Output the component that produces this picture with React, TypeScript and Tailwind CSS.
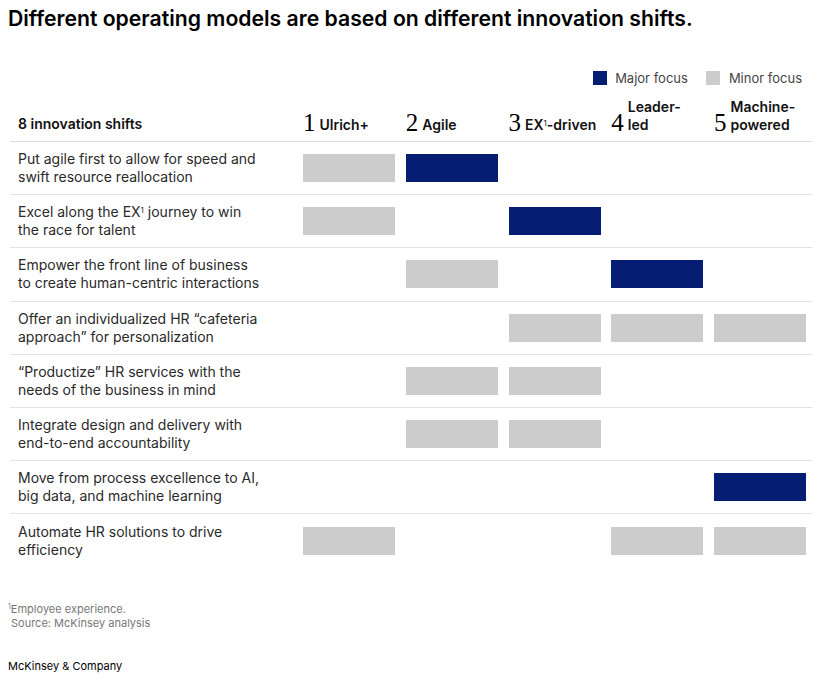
const SANS = "font-['Inter','Liberation_Sans',Arial,sans-serif]";

type Focus = "major" | "minor" | null;

const columns = [
  { n: "1", label: ["Ulrich+"] },
  { n: "2", label: ["Agile"] },
  { n: "3", label: ["EX", "-driven"] },
  { n: "4", label: ["Leader-", "led"] },
  { n: "5", label: ["Machine-", "powered"] },
];

const rows: { text: React.ReactNode; cells: Focus[] }[] = [
  {
    text: <>Put agile first to allow for speed and<br />swift resource reallocation</>,
    cells: ["minor", "major", null, null, null],
  },
  {
    text: <>Excel along the EX<sup className="text-[8px]">1</sup> journey to win<br />the race for talent</>,
    cells: ["minor", null, "major", null, null],
  },
  {
    text: <>Empower the front line of business<br />to create human-centric interactions</>,
    cells: [null, "minor", null, "major", null],
  },
  {
    text: <>Offer an individualized HR “cafeteria<br />approach” for personalization</>,
    cells: [null, null, "minor", "minor", "minor"],
  },
  {
    text: <>“Productize” HR services with the<br />needs of the business in mind</>,
    cells: [null, "minor", "minor", null, null],
  },
  {
    text: <>Integrate design and delivery with<br />end-to-end accountability</>,
    cells: [null, "minor", "minor", null, null],
  },
  {
    text: <>Move from process excellence to AI,<br />big data, and machine learning</>,
    cells: [null, null, null, null, "major"],
  },
  {
    text: <>Automate HR solutions to drive<br />efficiency</>,
    cells: ["minor", null, null, "minor", "minor"],
  },
];

function ColumnHeader({ n, label }: { n: string; label: string[] }) {
  const twoLine = label.length === 2 && label[0].endsWith("-");
  const cls = "text-[14px] leading-[18px] font-semibold text-[#111] pb-[1px]";
  return (
    <div className="w-[92px] flex items-end gap-[4px] whitespace-nowrap">
      <span className="font-['Liberation_Serif',serif] text-[25px] leading-[24px] text-black">{n}</span>
      {twoLine ? (
        <span className={cls}>
          {label[0]}
          <br />
          {label[1]}
        </span>
      ) : label.length === 2 ? (
        <span className={cls}>
          {label[0]}
          <sup className="text-[8px] font-normal">1</sup>
          {label[1]}
        </span>
      ) : (
        <span className={cls}>{label[0]}</span>
      )}
    </div>
  );
}

export default function App() {
  return (
    <div className={`${SANS} w-[836px] h-[676px] bg-white text-[#222] pt-[4px]`}>
      <h1 className="px-[8px] text-[21.2px] leading-[28px] font-semibold text-black">
        Different operating models are based on different innovation shifts.
      </h1>

      <div className="mt-[37px] flex justify-end items-center gap-[18px] pr-[34px] text-[13px] leading-[18px] text-[#444]">
        <div className="flex items-center gap-[8px]">
          <span className="w-[14px] h-[14px] bg-[#051d72]" />
          Major focus
        </div>
        <div className="flex items-center gap-[9px]">
          <span className="w-[14px] h-[14px] bg-[#cccccc]" />
          Minor focus
        </div>
      </div>

      <div className="ml-[10px] w-[802px] mt-[14px]">
        <div className="flex items-end h-[41px] pb-[6px] border-b border-[#dcdcdc]">
          <div className="w-[293px] pl-[8px] pb-[2px] text-[14px] leading-[18px] font-semibold text-[#111]">
            8 innovation shifts
          </div>
          <div className="flex gap-[10.75px]">
            {columns.map((c) => (
              <ColumnHeader key={c.n} n={c.n} label={c.label} />
            ))}
          </div>
        </div>

        {rows.map((r, i) => (
          <div
            key={i}
            className={`flex items-center h-[53.2px] ${i < rows.length - 1 ? "border-b border-[#e3e3e3]" : ""}`}
          >
            <div className="w-[293px] pl-[8px] text-[14px] leading-[18px] text-[#2a2a2a]">{r.text}</div>
            <div className="flex gap-[10.75px]">
              {r.cells.map((c, j) => (
                <div
                  key={j}
                  className={`w-[92px] h-[28px] ${
                    c === "major" ? "bg-[#051d72]" : c === "minor" ? "bg-[#cccccc]" : ""
                  }`}
                />
              ))}
            </div>
          </div>
        ))}
      </div>

      <div className="mt-[34px] px-[8px] text-[11px] leading-[14px] text-[#777]">
        <div>
          <sup className="text-[7px]">1</sup>Employee experience.
        </div>
        <div className="pl-[3px]">Source: McKinsey analysis</div>
      </div>

      <div className="mt-[29px] px-[8px] text-[11px] leading-[14px] text-black">McKinsey &amp; Company</div>
    </div>
  );
}
